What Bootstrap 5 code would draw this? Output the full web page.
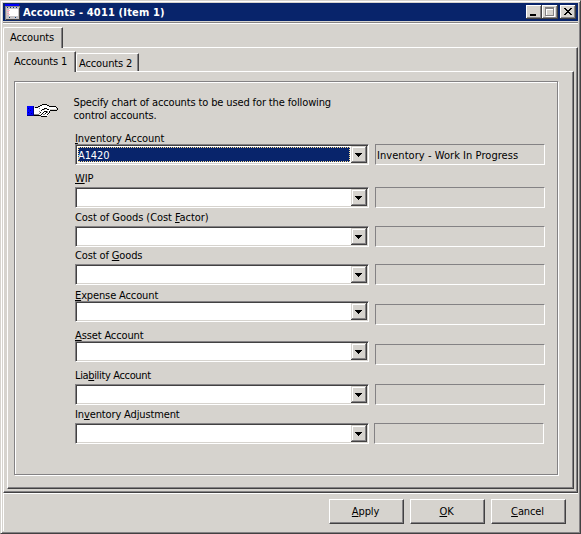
<!DOCTYPE html>
<html lang="en">
<head>
<meta charset="utf-8">
<title>Accounts - 4011 (Item 1)</title>
<link href="https://cdn.jsdelivr.net/npm/bootstrap@5.3.0/dist/css/bootstrap.min.css" rel="stylesheet">
<style>
:root{--face:#d6d3ce;--sh:#848284;--dk:#424142;--navy:#08246b}
body{margin:0;background:var(--face);font:11px/13px "DejaVu Sans Condensed","DejaVu Sans",sans-serif;letter-spacing:-.13px;color:#000;overflow:hidden}
.win{width:581px;height:534px;border:1px solid;border-color:var(--face) var(--dk) var(--dk) var(--face);box-shadow:inset 1px 1px #fff,inset -1px -1px var(--sh);padding:2px}
.titlebar{height:18px;background:var(--navy);color:#fff;padding:0 2px 0 2px}
.titlebar .ttl{font-weight:bold;margin-left:2px;line-height:19px;letter-spacing:.17px}
.capbtn{width:16px;height:14px;background:var(--face);box-shadow:inset -1px -1px var(--dk),inset 1px 1px #fff,inset -2px -2px var(--sh)}
.capbtn.apart{margin-left:2px}
.rule{height:2px;margin-top:1px;background:linear-gradient(var(--sh) 50%,#fff 50%)}
.page{border:1px solid;border-color:#fff var(--dk) var(--dk) #fff;box-shadow:inset -1px -1px var(--sh)}
.page-outer{width:575px;height:446px;padding:3px}
.page-inner{width:567px;height:418px;padding:9px 0 0 6px}
.tabx{border:1px solid;border-color:#fff var(--dk) #fff #fff;border-bottom:0;box-shadow:inset -1px 0 var(--sh);border-radius:2px 1px 0 0;background:var(--face);white-space:nowrap}
.tabx.on{margin-bottom:-1px;height:21px;position:relative;z-index:1}
.tab-a{width:60px;padding:3px 0 0 6px}
.tab-b{width:69px;padding:3px 0 0 6px}
.tab-c{width:63px;height:18px;padding:3px 0 0 2px}
.grp{width:544px;height:394px;border:1px solid var(--sh);box-shadow:inset 1px 1px #fff,1px 1px #fff;padding-top:14px}
.intro{margin-left:15.5px;white-space:nowrap}
.hand{margin:7px 0 0 12px}
.fields{padding:9px 0 0 60px}
.lbl{height:13px;line-height:15px;white-space:nowrap}
.combo{width:294px;height:21px;background:#fff;border:1px solid;border-color:var(--sh) #fff #fff var(--sh);box-shadow:inset 1px 1px var(--dk),inset -1px -1px var(--face);padding:1px}
.sel{margin:1px;background:var(--navy);color:#fff;outline:1px dotted #f7db94;outline-offset:-1px;line-height:17px}
.drop{width:16px;height:17px;background:var(--face);box-shadow:inset -1px -1px var(--dk),inset 1px 1px var(--face),inset -2px -2px var(--sh),inset 2px 2px #fff}
.ro{width:170px;height:21px;border:1px solid;border-color:var(--sh) #fff #fff var(--sh);margin-left:6px;padding-left:1px;line-height:21px;letter-spacing:.05px;white-space:nowrap}
.low{margin-top:3px}
.near{margin-left:5px}
.wide{letter-spacing:-.06px}
.tight{letter-spacing:-.35px}
.g1{margin-top:1px}.g2{margin-top:2px}.g3{margin-top:3px}.g6{margin-top:6px}
.foot{border:solid #fff;border-width:1px 0 0 1px;height:39px;padding:5px 12px 0 0;gap:6px}
.cmd{width:75px;height:25px;background:var(--face);border:1px solid;border-color:#fff var(--dk) var(--dk) #fff;box-shadow:inset -1px -1px var(--sh);padding:0 2px 0 0;font:inherit;letter-spacing:inherit;color:#000;line-height:23px}
u{text-underline-offset:1px;text-decoration-thickness:1px;text-decoration-skip-ink:none}
svg{display:block;flex:none}
</style>
</head>
<body>
<svg class="d-none"><symbol id="arrow" viewBox="0 0 16 17"><path shape-rendering="crispEdges" d="M4 7h7v1h-1v1h-1v1h-1v1h-1v-1h-1v-1h-1v-1h-1z"/></symbol></svg>
<div class="win d-flex flex-column">
  <div class="titlebar d-flex align-items-center flex-shrink-0">
    <svg width="16" height="16" shape-rendering="crispEdges"><path fill="#848284" d="M0 2h15v14H0z"/><path fill="#424142" d="M14 4h1v12H1v-1h13z"/><path fill="#c6c3c6" d="M1 3h13v12H1z"/><path fill="#0000f7" d="M0 0h14v2H0z"/><path fill="#003c7b" d="M2 3h1v1H2zM5 3h1v1H5zM8 3h1v1H8zM11 3h1v1h-1zM4 13h1v1H4zM10 13h1v1h-1z"/><path fill="#fff" d="M4 5h9v7H4z"/><path fill="#ffb6c6" d="M2 6h3v1H2zM2 8h2v1H2zM2 10h3v1H2z"/></svg>
    <span class="ttl">Accounts - 4011 (Item 1)</span>
    <div class="d-flex ms-auto">
      <div class="capbtn"><svg width="16" height="14" shape-rendering="crispEdges"><path d="M4 9h6v2H4z"/></svg></div>
      <div class="capbtn"><svg width="16" height="14" shape-rendering="crispEdges"><path fill="#fff" d="M4 3h9v9H4z"/><path fill="#848284" d="M3 2h9v9H3z"/><path fill="#fff" d="M4 4h7v6H4z"/><path fill="#d6d3ce" d="M5 5h6v5H5z"/></svg></div>
      <div class="capbtn apart"><svg width="16" height="14" shape-rendering="crispEdges"><path d="M4 3h2v1h1v1h2v-1h1v-1h2v1h-1v1h-1v1h-1v1h1v1h1v1h1v1h-2v-1h-1v-1h-2v1h-1v1h-2v-1h1v-1h1v-1h1v-1h-1v-1h-1v-1h-1z"/></svg></div>
    </div>
  </div>
  <div class="rule flex-shrink-0"></div>
  <div class="d-flex g3"><div class="tabx on tab-a">Accounts</div></div>
  <div class="page page-outer flex-shrink-0">
    <div class="d-flex align-items-end"><div class="tabx on tab-b">Accounts 1</div><div class="tabx tab-c">Accounts 2</div></div>
    <div class="page page-inner">
      <div class="grp">
        <div class="d-flex">
          <svg class="hand" width="31" height="15" shape-rendering="crispEdges"><path fill="#000084" d="M0 3h7v10H0z"/><path fill="#0000ff" d="M0 3h6v9H0z"/><path fill="#000084" d="M1 5h1v1H1zM3 7h1v1H3zM1 9h1v1H1zM4 10h1v1H4z"/><path fill="#fff" d="M7 5h4l3-3h6l4 2h5v2h-6v5l-3 2h-7l-2-1H7z"/><path d="M8 4h3v1H8zM11 3h2v1h-2zM13 2h2v1h-2zM15 1h5v1h-5zM20 2h2v1h-2zM22 3h7v1h-7zM29 4h1v1h-1zM30 5h1v2h-1zM29 7h1v1h-1zM23 7h6v1h-6zM22 8h1v2h-1zM21 10h1v1h-1zM20 11h1v1h-1zM14 13h6v1h-6zM10 12h4v1h-4zM7 12h3v1H7zM17 5h3v1h-3zM15 6h2v1h-2zM20 6h2v1h-2zM14 7h1v1h-1zM17 8h3v1h-3zM13 9h1v1h-1zM16 9h1v1h-1zM19 9h1v1h-1zM15 10h1v1h-1zM18 10h1v1h-1zM14 11h1v1h-1z"/><path fill="#848284" d="M7 11h5v1H7zM12 8h1v1h-1zM12 10h1v1h-1zM17 6h1v1h-1zM16 11h2v1h-2zM12 5h1v1h-1zM20 8h1v2h-1z"/></svg>
          <div class="intro">Specify chart of accounts to be used for the following<br>control accounts.</div>
        </div>
        <div class="fields">
          <div class="lbl wide"><u>I</u>nventory Account</div>
          <div class="d-flex"><div class="combo d-flex"><div class="sel flex-fill">A1420</div><svg class="drop"><use href="#arrow"/></svg></div><div class="ro">Inventory - Work In Progress</div></div>
          <div class="lbl g6"><u>W</u>IP</div>
          <div class="d-flex g3"><div class="combo d-flex justify-content-end"><svg class="drop"><use href="#arrow"/></svg></div><div class="ro"></div></div>
          <div class="lbl wide g2">Cost of Goods (Cost <u>F</u>actor)</div>
          <div class="d-flex g3"><div class="combo d-flex justify-content-end"><svg class="drop"><use href="#arrow"/></svg></div><div class="ro"></div></div>
          <div class="lbl g1">Cost of <u>G</u>oods</div>
          <div class="d-flex g3"><div class="combo d-flex justify-content-end"><svg class="drop"><use href="#arrow"/></svg></div><div class="ro"></div></div>
          <div class="lbl g3"><u>E</u>xpense Account</div>
          <div class="d-flex"><div class="combo d-flex justify-content-end"><svg class="drop"><use href="#arrow"/></svg></div><div class="ro low"></div></div>
          <div class="lbl g3"><u>A</u>sset Account</div>
          <div class="d-flex"><div class="combo d-flex justify-content-end"><svg class="drop"><use href="#arrow"/></svg></div><div class="ro low"></div></div>
          <div class="lbl tight g3">Lia<u>b</u>ility Account</div>
          <div class="d-flex g3"><div class="combo d-flex justify-content-end"><svg class="drop"><use href="#arrow"/></svg></div><div class="ro"></div></div>
          <div class="lbl g2">In<u>v</u>entory Adjustment</div>
          <div class="d-flex g3"><div class="combo d-flex justify-content-end"><svg class="drop"><use href="#arrow"/></svg></div><div class="ro near"></div></div>
        </div>
      </div>
    </div>
  </div>
  <div class="foot d-flex justify-content-end">
    <button class="cmd"><u>A</u>pply</button><button class="cmd"><u>O</u>K</button><button class="cmd"><u>C</u>ancel</button>
  </div>
</div>
<script src="https://cdn.jsdelivr.net/npm/bootstrap@5.3.0/dist/js/bootstrap.bundle.min.js"></script>
</body>
</html>
